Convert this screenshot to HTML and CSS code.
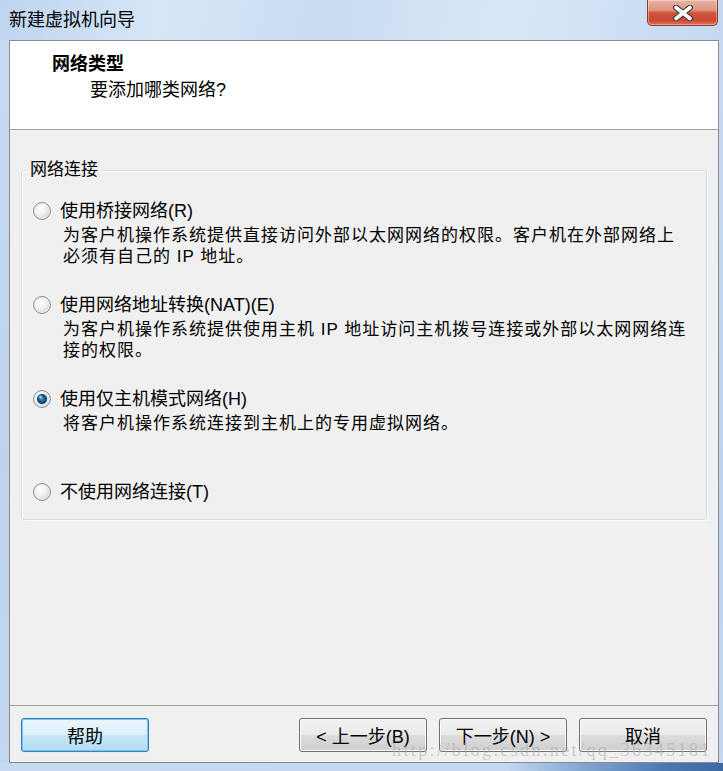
FILE: index.html
```html
<html>
<head>
    <title>新建虚拟机向导</title>
<link rel="stylesheet" href="styles.css">
</head>
<body>
<div class="window">
    <div class="titlebar">
        <span class="title">新建虚拟机向导</span>
        <div class="close-btn">
            <svg width="22" height="16" viewBox="0 0 22 16">
                <path d="M4 2.5 L18 13.5 M18 2.5 L4 13.5" stroke="#3b3b3b" stroke-width="6" stroke-linecap="round"/>
                <path d="M4 2.5 L18 13.5 M18 2.5 L4 13.5" stroke="#ffffff" stroke-width="3.6" stroke-linecap="round"/>
            </svg>
        </div>
    </div>

    <div class="client">
        <div class="header">
            <div class="header-title">网络类型</div>
            <div class="header-sub">要添加哪类网络?</div>
        </div>

        <div class="body">
            <fieldset class="group">
                <legend>网络连接</legend>

                <label class="option slot">
                    <span class="option-row"><input type="radio" name="net"><span>使用桥接网络(R)</span></span>
                    <span class="desc">为客户机操作系统提供直接访问外部以太网网络的权限。客户机在外部网络上<br>必须有自己的 IP 地址。</span>
                </label>

                <label class="option slot">
                    <span class="option-row"><input type="radio" name="net"><span>使用网络地址转换(NAT)(E)</span></span>
                    <span class="desc">为客户机操作系统提供使用主机 IP 地址访问主机拨号连接或外部以太网网络连<br>接的权限。</span>
                </label>

                <label class="option slot">
                    <span class="option-row"><input type="radio" name="net" checked><span>使用仅主机模式网络(H)</span></span>
                    <span class="desc">将客户机操作系统连接到主机上的专用虚拟网络。</span>
                </label>

                <label class="option">
                    <span class="option-row"><input type="radio" name="net"><span>不使用网络连接(T)</span></span>
                </label>
            </fieldset>
        </div>

        <div class="footer">
            <button class="btn btn-default">帮助</button>
            <span class="spacer"></span>
            <button class="btn">&lt; 上一步(B)</button>
            <button class="btn">下一步(N) &gt;</button>
            <button class="btn">取消</button>
        </div>
    </div>

    <div class="frame-bottom"></div>

    <!-- watermark lies over the footer -->
    <div class="watermark">http://blog.csdn.net/qq_36345181</div>
</div>
</body>
</html>
```

FILE: styles.css
```css
body {
    margin: 0;
    font-family: "Liberation Sans", "Noto Sans CJK SC", sans-serif;
    font-size: 18px;
    color: #000;
}
.window {
    position: relative;
    width: 723px;
    height: 771px;
    overflow: hidden;
    display: flex;
    flex-direction: column;
    background: linear-gradient(to bottom, #c8dcf2 0%, #bcd3ee 60%, #c3d8f0 100%);
}
.titlebar {
    height: 40px;
    flex: none;
    display: flex;
    justify-content: space-between;
    align-items: flex-start;
    background: linear-gradient(100deg, #bed5ef 0%, #d6e6f7 22%, #c9dcf2 45%, #d8e7f7 70%, #c4d9f1 100%);
}
.title {
    padding-left: 9px;
    line-height: 40px;
}
.close-btn {
    width: 71px;
    height: 26px;
    margin-right: 5px;
    box-sizing: border-box;
    border: 1px solid #8c3b2e;
    border-top: none;
    border-radius: 0 0 5px 5px;
    background: linear-gradient(to bottom, #eab3a6 0%, #e09584 40%, #d1543a 52%, #c94a31 80%, #d9735c 100%);
    box-shadow: inset 0 0 0 1px rgba(255, 255, 255, 0.35);
    display: flex;
    align-items: center;
    justify-content: center;
}
.client {
    height: 723px;
    flex: none;
    margin: 0 4px 0 9px;
    box-sizing: border-box;
    border: 1px solid #8a8a8a;
    background: #f0f0f0;
    display: flex;
    flex-direction: column;
}
.header {
    height: 89px;
    flex: none;
    box-sizing: border-box;
    background: #fff;
    border-bottom: 1px solid #a0a0a0;
    padding-top: 13px;
}
.header-title {
    padding-left: 42px;
    line-height: 20px;
    font-weight: bold;
}
.header-sub {
    padding-left: 80px;
    margin-top: 6px;
    line-height: 20px;
}
.body {
    flex: 1;
    padding: 30px 11px 0 11px;
}
.group {
    margin: 0;
    padding: 19px 11px 15px 11px;
    border: 1px solid #d5dfe5;
    border-radius: 3px;
    box-shadow: inset 1px 1px 0 #fff, 1px 1px 0 #fff;
    min-width: 0;
}
.group legend {
    margin-left: -6px;
    padding: 0 3px;
    line-height: 20px;
    font-size: 17px;
}
.option {
    display: flex;
    flex-direction: column;
}
.slot {
    height: 94px;
}
.slot + .slot + .slot {
    height: 93px;
}
.option-row {
    display: flex;
    align-items: center;
    gap: 9px;
    height: 24px;
    line-height: 24px;
}
.option input {
    -webkit-appearance: none;
    appearance: none;
    margin: 0;
    width: 18px;
    height: 18px;
    flex: none;
    box-sizing: border-box;
    border-radius: 50%;
    border: 1px solid #8e8f8f;
    background: radial-gradient(circle at 40% 35%, #ffffff 0%, #f1f1f1 40%, #d3d3d3 85%, #c4c4c4 100%);
    box-shadow: inset 0 0 0 1px #ececec;
}
.option input:checked {
    background:
        radial-gradient(circle at 6.5px 6px, rgba(215, 243, 255, 0.95) 0, rgba(120, 200, 240, 0.5) 1.5px, rgba(60, 160, 220, 0) 2.8px),
        radial-gradient(circle at 8px 8px, #2f96d4 0, #15639f 2.6px, #0b3a66 4.5px, #8a9aa6 5px, rgba(200, 200, 200, 0) 5.5px),
        radial-gradient(circle at 40% 35%, #ffffff 0%, #f1f1f1 40%, #d3d3d3 85%, #c4c4c4 100%);
}
.desc {
    margin-top: 2px;
    padding-left: 30px;
    line-height: 21px;
    font-size: 17px;
    letter-spacing: 1px;
    white-space: nowrap;
}
.footer {
    flex: none;
    display: flex;
    gap: 12px;
    border-top: 1px solid #a0a0a0;
    padding: 12px 11px 10px 11px;
}
.spacer {
    flex: 1;
}
.btn {
    width: 128px;
    height: 34px;
    border: 1px solid #707070;
    border-radius: 3px;
    background: linear-gradient(to bottom, #f2f2f2 0%, #ebebeb 49%, #dddddd 50%, #cfcfcf 100%);
    box-shadow: inset 0 0 0 1px #fbfbfb;
    font: inherit;
    color: #000;
    padding: 0;
}
.btn-default {
    border-color: #3c7fb1;
    background: linear-gradient(to bottom, #eaf6fd 0%, #dcf1fc 49%, #c6e7f8 50%, #b4dcf2 100%);
    box-shadow: inset 0 0 0 1px #6fc8f2, 0 0 1px #7fd0f5;
}
.frame-bottom {
    flex: 1;
    background: linear-gradient(to right, #c6daf2 0%, #c3d8f0 70%, #86a9d4 80%, #4a78b2 92%, #3d6aa4 100%);
}
.watermark {
    position: absolute;
    left: 392px;
    top: 740px;
    font-family: "Liberation Serif", serif;
    font-size: 18px;
    letter-spacing: 2.4px;
    color: rgba(170, 170, 170, 0.55);
    white-space: nowrap;
}
```
